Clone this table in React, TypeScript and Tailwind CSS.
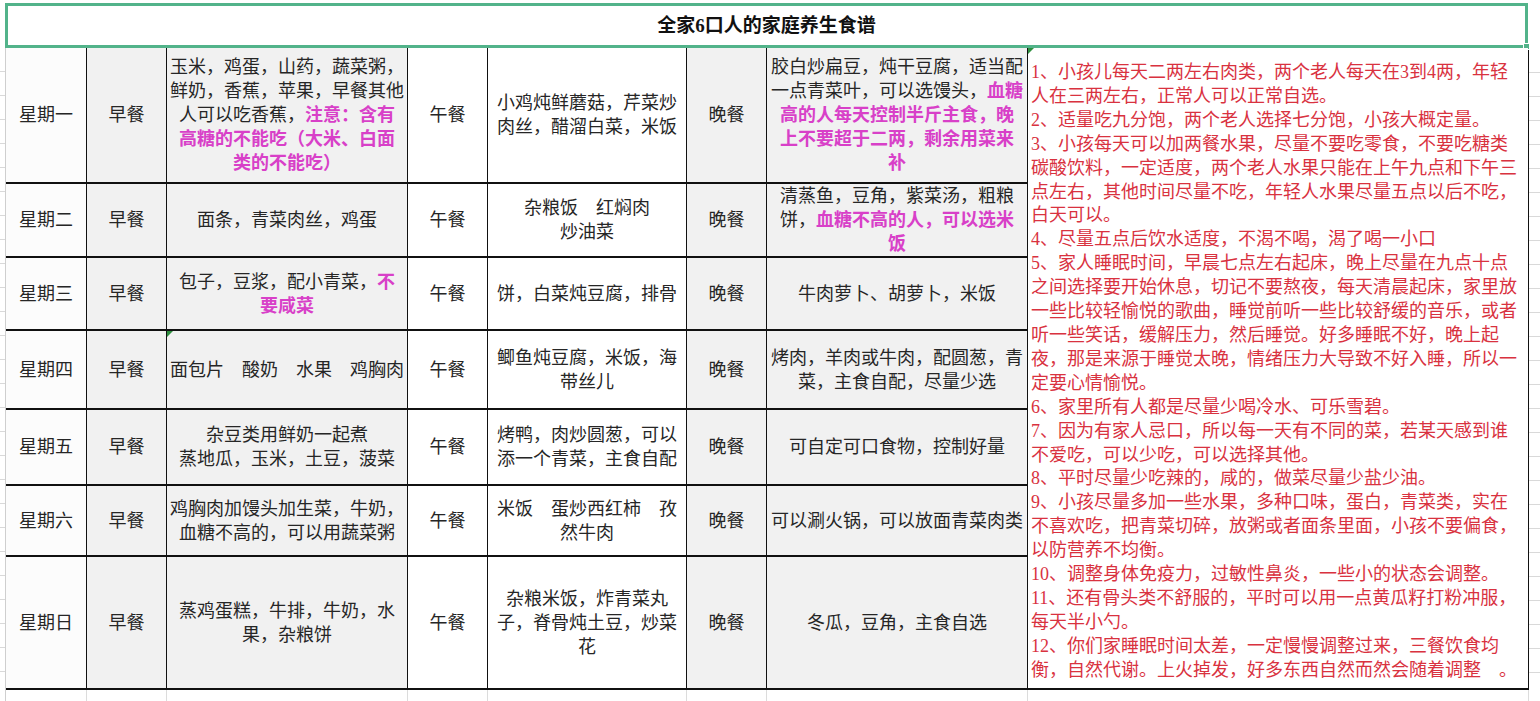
type Seg = string | { p: string };
type Line = Seg[];

const P = (s: string) => ({ p: s });

const days = [
    {
        day: '星期一',
        bf: [['玉米，鸡蛋，山药，蔬菜粥，'], ['鲜奶，香蕉，苹果，早餐其他'], ['人可以吃香蕉，', P('注意：含有')], [P('高糖的不能吃（大米、白面')], [P('类的不能吃）')]],
        lunch: [['小鸡炖鲜蘑菇，芹菜炒'], ['肉丝，醋溜白菜，米饭']],
        dinner: [['胶白炒扁豆，炖干豆腐，适当配'], ['一点青菜叶，可以选馒头，', P('血糖')], [P('高的人每天控制半斤主食，晚')], [P('上不要超于二两，剩余用菜来')], [P('补')]],
    },
    {
        day: '星期二',
        bf: [['面条，青菜肉丝，鸡蛋']],
        lunch: [['杂粮饭\u3000红焖肉'], ['炒油菜']],
        dinner: [['清蒸鱼，豆角，紫菜汤，粗粮'], ['饼，', P('血糖不高的人，可以选米')], [P('饭')]],
    },
    {
        day: '星期三',
        bf: [['包子，豆浆，配小青菜，', P('不')], [P('要咸菜')]],
        lunch: [['饼，白菜炖豆腐，排骨']],
        dinner: [['牛肉萝卜、胡萝卜，米饭']],
    },
    {
        day: '星期四',
        mark: true,
        bf: [['面包片\u3000酸奶\u3000水果\u3000鸡胸肉']],
        lunch: [['鲫鱼炖豆腐，米饭，海'], ['带丝儿']],
        dinner: [['烤肉，羊肉或牛肉，配圆葱，青'], ['菜，主食自配，尽量少选']],
    },
    {
        day: '星期五',
        bf: [['杂豆类用鲜奶一起煮'], ['蒸地瓜，玉米，土豆，菠菜']],
        lunch: [['烤鸭，肉炒圆葱，可以'], ['添一个青菜，主食自配']],
        dinner: [['可自定可口食物，控制好量']],
    },
    {
        day: '星期六',
        bf: [['鸡胸肉加馒头加生菜，牛奶，'], ['血糖不高的，可以用蔬菜粥']],
        lunch: [['米饭\u3000蛋炒西红柿\u3000孜'], ['然牛肉']],
        dinner: [['可以涮火锅，可以放面青菜肉类']],
    },
    {
        day: '星期日',
        bf: [['蒸鸡蛋糕，牛排，牛奶，水'], ['果，杂粮饼']],
        lunch: [['杂粮米饭，炸青菜丸'], ['子，脊骨炖土豆，炒菜'], ['花']],
        dinner: [['冬瓜，豆角，主食自选']],
    },
];

const notes = [
    '1、小孩儿每天二两左右肉类，两个老人每天在3到4两，年轻',
    '人在三两左右，正常人可以正常自选。',
    '2、适量吃九分饱，两个老人选择七分饱，小孩大概定量。',
    '3、小孩每天可以加两餐水果，尽量不要吃零食，不要吃糖类',
    '碳酸饮料，一定适度，两个老人水果只能在上午九点和下午三',
    '点左右，其他时间尽量不吃，年轻人水果尽量五点以后不吃，',
    '白天可以。',
    '4、尽量五点后饮水适度，不渴不喝，渴了喝一小口',
    '5、家人睡眠时间，早晨七点左右起床，晚上尽量在九点十点',
    '之间选择要开始休息，切记不要熬夜，每天清晨起床，家里放',
    '一些比较轻愉悦的歌曲，睡觉前听一些比较舒缓的音乐，或者',
    '听一些笑话，缓解压力，然后睡觉。好多睡眠不好，晚上起',
    '夜，那是来源于睡觉太晚，情绪压力大导致不好入睡，所以一',
    '定要心情愉悦。',
    '6、家里所有人都是尽量少喝冷水、可乐雪碧。',
    '7、因为有家人忌口，所以每一天有不同的菜，若某天感到谁',
    '不爱吃，可以少吃，可以选择其他。',
    '8、平时尽量少吃辣的，咸的，做菜尽量少盐少油。',
    '9、小孩尽量多加一些水果，多种口味，蛋白，青菜类，实在',
    '不喜欢吃，把青菜切碎，放粥或者面条里面，小孩不要偏食，',
    '以防营养不均衡。',
    '10、调整身体免疫力，过敏性鼻炎，一些小的状态会调整。',
    '11、还有骨头类不舒服的，平时可以用一点黄瓜籽打粉冲服，',
    '每天半小勺。',
    '12、你们家睡眠时间太差，一定慢慢调整过来，三餐饮食均',
    '衡，自然代谢。上火掉发，好多东西自然而然会随着调整\u3000。',
];

function Lines({ lines }: { lines: Line[] }) {
    return (
        <div>
            {lines.map((line, i) => (
                <div key={i} className="whitespace-pre">
                    {line.map((s, j) =>
                        typeof s === 'string' ? (
                            <span key={j}>{s}</span>
                        ) : (
                            <span key={j} className="font-bold text-[#d840c8]">
                                {s.p}
                            </span>
                        ),
                    )}
                </div>
            ))}
        </div>
    );
}

function Corner() {
    return <div className="absolute left-0 top-0 h-0 w-0 border-r-[6px] border-t-[6px] border-r-transparent border-t-[#2f8f3f]" />;
}

const cellBase = 'relative flex items-center justify-center text-center';

export default function App() {
    return (
        <div className="relative h-[701px] w-[1540px] overflow-hidden bg-white font-['Liberation_Serif','Noto_Sans_CJK_SC',serif] text-[18px] leading-[24px] text-[#262626]">
            {/* title */}
            <div className="flex pt-[3px]">
                <div className="w-[5px]" />
                <div className="relative flex h-[45px] w-[1523px] items-center justify-center border-[3px] border-[#52b38a] text-[19px] font-bold text-[#111]">
                    全家6口人的家庭养生食谱
                    <div className="absolute -bottom-[5px] -right-[5px] h-[7px] w-[7px] border border-white bg-[#52b38a]" />
                </div>
            </div>

            {/* table */}
            <div className="flex h-[642px] items-start">
                <div className="flex h-[642px] w-[6px] flex-col overflow-hidden border-r border-[#cfcfcf]">
                    {Array.from({ length: 27 }).map((_, i) => (
                        <div key={i} className="h-[24px] shrink-0 border-b border-[#d9d9d9]" />
                    ))}
                </div>
                <div className="grid h-[642px] grid-cols-[80px_79px_240px_79px_198px_79px_260px_500px] grid-rows-[134px_72px_71px_77px_74px_69px_131px] gap-x-px gap-y-[2px] bg-[#111] pb-[2px] pr-px">
                    <div className="relative col-start-8 row-span-7 row-start-1 bg-white pl-[3px] pt-[13px] leading-[23.9px] text-[#d9323f] whitespace-nowrap">
                        <Corner />
                        {notes.map((n, i) => (
                            <div key={i} className="whitespace-pre">
                                {n}
                            </div>
                        ))}
                    </div>
                    {days.map((d) => (
                        <>
                            <div key={d.day + 'a'} className={`${cellBase} bg-[#fcfcfc]`}>
                                {d.day}
                            </div>
                            <div key={d.day + 'b'} className={`${cellBase} bg-[#f1f1f1]`}>
                                早餐
                            </div>
                            <div key={d.day + 'c'} className={`${cellBase} bg-[#f1f1f1]`}>
                                {d.mark && <Corner />}
                                <Lines lines={d.bf} />
                            </div>
                            <div key={d.day + 'd'} className={`${cellBase} bg-white`}>
                                午餐
                            </div>
                            <div key={d.day + 'e'} className={`${cellBase} bg-white`}>
                                <Lines lines={d.lunch} />
                            </div>
                            <div key={d.day + 'f'} className={`${cellBase} bg-[#f1f1f1]`}>
                                晚餐
                            </div>
                            <div key={d.day + 'g'} className={`${cellBase} bg-[#f1f1f1]`}>
                                <Lines lines={d.dinner} />
                            </div>
                        </>
                    ))}
                </div>
                <div className="flex h-[642px] w-[11px] flex-col overflow-hidden pt-[1px]">
                    {Array.from({ length: 27 }).map((_, i) => (
                        <div key={i} className="h-[24px] shrink-0 border-b border-[#d9d9d9]" />
                    ))}
                </div>
            </div>

            {/* rows below the table */}
            <div className="flex h-[11px]">
                <div className="w-[6px] border-r border-[#cfcfcf]" />
                <div className="grid grid-cols-[80px_79px_240px_79px_198px_79px_260px_500px] gap-x-px bg-[#dcdcdc] pr-px">
                    {Array.from({ length: 8 }).map((_, i) => (
                        <div key={i} className="bg-white" />
                    ))}
                </div>
            </div>
        </div>
    );
}
